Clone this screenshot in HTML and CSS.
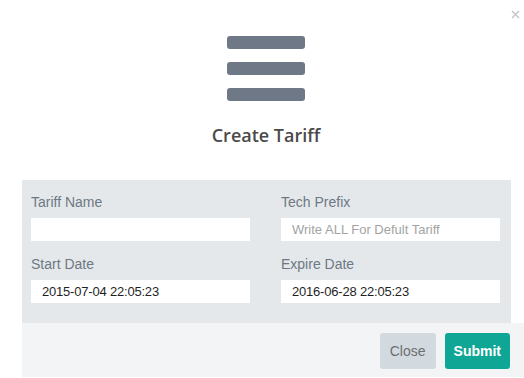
FILE: index.html
```html
<!DOCTYPE html>
<html>
<head>
<meta charset="utf-8">
<link rel="stylesheet" href="styles.css">
</head>
<body>
<div class="modal">
  <button class="dismiss" aria-label="close">
    <svg width="9" height="9" viewBox="0 0 9 9"><path d="M1 1L8 8M8 1L1 8" stroke="#c4c4c4" stroke-width="1.4" fill="none"/></svg>
  </button>
  <div class="header">
    <div class="icon">
      <span class="bar"></span>
      <span class="bar"></span>
      <span class="bar"></span>
    </div>
    <h2 class="title">Create Tariff</h2>
  </div>
  <div class="body">
    <div class="field">
      <label class="label">Tariff Name</label>
      <div class="input"></div>
    </div>
    <div class="field">
      <label class="label">Tech Prefix</label>
      <div class="input placeholder">Write ALL For Defult Tariff</div>
    </div>
    <div class="field">
      <label class="label">Start Date</label>
      <div class="input date">2015-07-04 22:05:23</div>
    </div>
    <div class="field">
      <label class="label">Expire Date</label>
      <div class="input date">2016-06-28 22:05:23</div>
    </div>
  </div>
  <div class="footer">
    <button class="btn btn-close">Close</button>
    <button class="btn btn-submit">Submit</button>
  </div>
</div>
</body>
</html>
```
FILE: styles.css
```css
html, body {
  margin: 0;
  padding: 0;
  background: #ffffff;
}
body {
  font-family: "Liberation Sans", Arial, sans-serif;
  width: 524px;
  height: 378px;
  overflow: hidden;
}
.modal {
  position: relative;
  padding-left: 22px;
}
.dismiss {
  position: absolute;
  top: 10px;
  right: 4px;
  width: 9px;
  height: 9px;
  padding: 0;
  border: 0;
  background: none;
  display: flex;
}
.header {
  width: 488px;
  padding-top: 36px;
  display: flex;
  flex-direction: column;
  align-items: center;
}
.icon {
  display: flex;
  flex-direction: column;
  gap: 13px;
}
.bar {
  display: block;
  width: 78px;
  height: 13px;
  border-radius: 3px;
  background: #6e7887;
}
.title {
  margin: 22px 0 0;
  font-family: "Open Sans", sans-serif;
  font-weight: 600;
  font-size: 18px;
  line-height: 24px;
  color: #4a4a4a;
}
.body {
  margin-top: 33px;
  width: 489px;
  box-sizing: border-box;
  background: #e4e8eb;
  padding: 14px 0 20px 9px;
  display: grid;
  grid-template-columns: 219px 219px;
  column-gap: 31px;
  row-gap: 15px;
}
.field {
  display: flex;
  flex-direction: column;
  gap: 8px;
}
.label {
  font-size: 14px;
  line-height: 16px;
  color: #6e7883;
}
.input {
  height: 23px;
  background: #ffffff;
  box-sizing: border-box;
  padding-left: 11px;
  font-size: 13px;
  line-height: 23px;
  white-space: nowrap;
  overflow: hidden;
}
.placeholder {
  color: #a3a3a3;
}
.date {
  color: #1f1f1f;
  letter-spacing: -0.2px;
}
.footer {
  background: #f3f4f6;
  height: 54px;
  box-sizing: border-box;
  padding: 10px 14px 0 0;
  display: flex;
  justify-content: flex-end;
  align-items: flex-start;
  gap: 9px;
}
.btn {
  height: 36px;
  padding: 0 10px;
  border: 0;
  border-radius: 3px;
  font-family: "Liberation Sans", Arial, sans-serif;
  font-size: 14px;
}
.btn-close {
  background: #d3dadf;
  color: #6b6f73;
}
.btn-submit {
  background: #0fa695;
  color: #ffffff;
  font-weight: bold;
  padding: 0 9px;
}
```
